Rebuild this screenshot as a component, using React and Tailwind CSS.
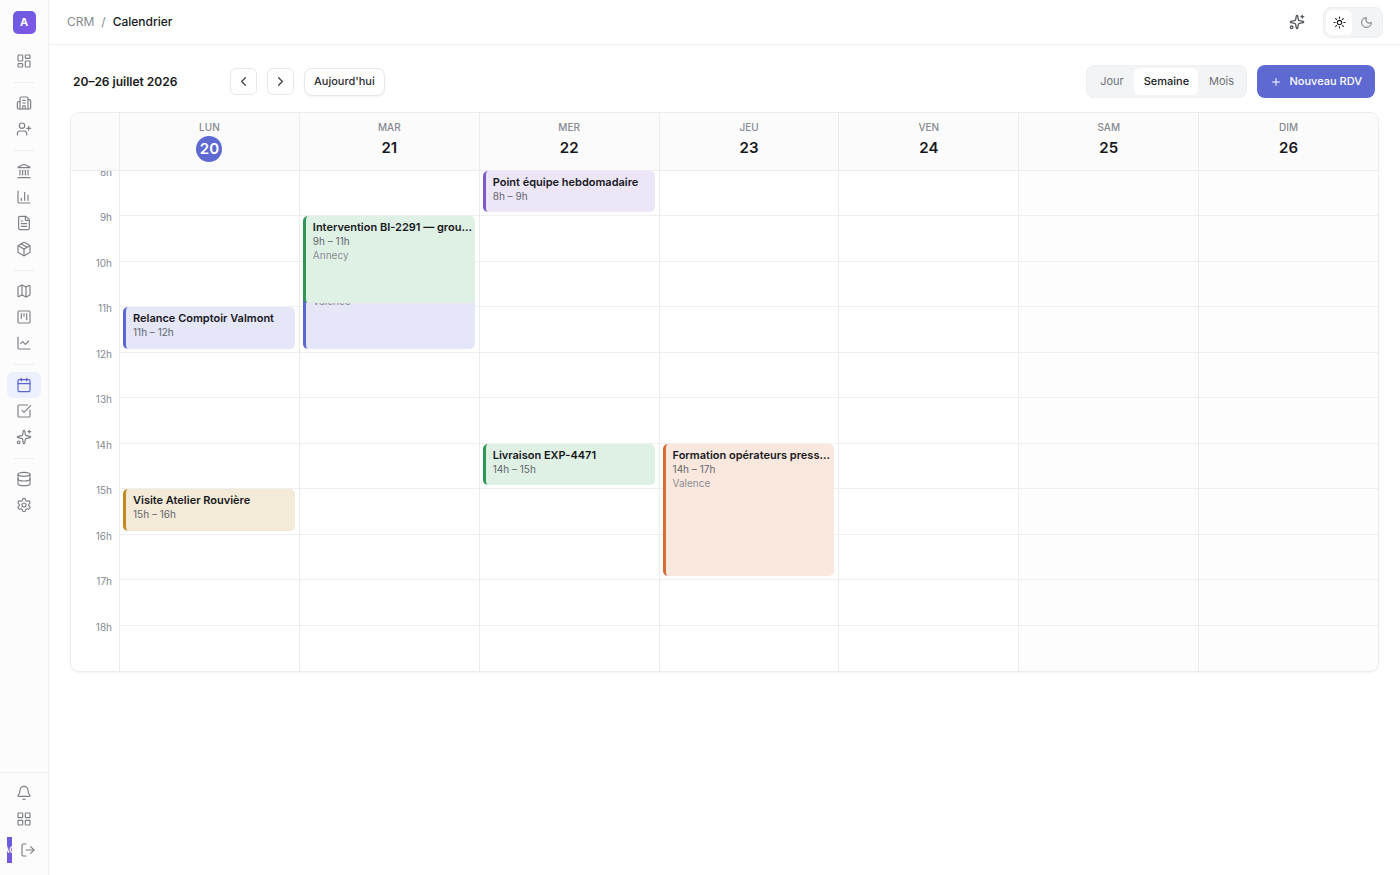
import React from "react";
import {
  LayoutDashboard, Building2, UserPlus, Landmark, ChartColumn, FileText, Package, Map as MapIcon,
  SquareKanban, ChartLine, Calendar, SquareCheckBig, Sparkles, Database, Settings, Bell,
  LayoutGrid, LogOut, ChevronLeft, ChevronRight, Plus, Sun, Moon,
} from "lucide-react";

const navGroups = [
  [["Tableau de bord", LayoutDashboard]],
  [["Entreprises", Building2], ["Contacts", UserPlus]],
  [["Finances", Landmark], ["Statistiques", ChartColumn], ["Documents", FileText], ["Produits", Package]],
  [["Carte", MapIcon], ["Pipeline", SquareKanban], ["Prévisions", ChartLine]],
  [["Calendrier", Calendar], ["Tâches", SquareCheckBig], ["Assistant", Sparkles]],
  [["Données", Database], ["Paramètres", Settings]],
];

const days = [
  ["LUN", 20], ["MAR", 21], ["MER", 22], ["JEU", 23], ["VEN", 24], ["SAM", 25], ["DIM", 26],
];

const hours = [8, 9, 10, 11, 12, 13, 14, 15, 16, 17, 18];

const tones = {
  indigo: "bg-[#e5e6f8] border-[#5b67d3]",
  violet: "bg-[#ece6f8] border-[#7e5bc2]",
  green: "bg-[#dff0e5] border-[#2f9653]",
  amber: "bg-[#f3ebd8] border-[#c08a1c]",
  orange: "bg-[#fae8df] border-[#d96c36]",
};

const rowStart = {
  8: "row-start-1", 9: "row-start-2", 10: "row-start-3", 11: "row-start-4", 14: "row-start-7", 15: "row-start-8",
};
const rowSpan = { 1: "row-span-1", 2: "row-span-2", 3: "row-span-3" };

const events = [
  { day: 20, from: 11, to: 12, title: "Relance Comptoir Valmont", tone: "indigo" },
  { day: 20, from: 15, to: 16, title: "Visite Atelier Rouvière", tone: "amber" },
  { day: 21, from: 10, to: 12, title: "Rendez-vous client", place: "Valence", tone: "indigo" },
  { day: 21, from: 9, to: 11, title: "Intervention BI-2291 — groupe froid", place: "Annecy", tone: "green" },
  { day: 22, from: 8, to: 9, title: "Point équipe hebdomadaire", tone: "violet" },
  { day: 22, from: 14, to: 15, title: "Livraison EXP-4471", tone: "green" },
  { day: 23, from: 14, to: 17, title: "Formation opérateurs presse plieuse", place: "Valence", tone: "orange" },
];

function IconButton({ label, icon: Icon, active }) {
  return (
    <button
      type="button"
      aria-label={label}
      className={`flex h-[26px] w-[34px] items-center justify-center rounded-md ${
        active ? "bg-[#eceffc] text-[#5b63d3]" : "text-[#7c7f85]"
      }`}
    >
      <Icon size={16} strokeWidth={1.75} />
    </button>
  );
}

function Sidebar() {
  return (
    <aside className="flex w-[49px] shrink-0 flex-col border-r border-[#efeff1] bg-[#fcfcfd]">
      <div className="flex h-[45px] items-center justify-center">
        <a
          href="#accueil"
          className="flex h-[23px] w-[23px] items-center justify-center rounded-[5px] bg-linear-to-br from-[#6a5be0] to-[#8058e6] text-[11px] font-bold text-white"
        >
          A
        </a>
      </div>
      <nav className="flex flex-1 flex-col items-center pt-[3px]">
        {navGroups.map((group, i) => (
          <React.Fragment key={i}>
            {i > 0 && <hr className="mt-2 mb-[7px] w-5 border-[#ededef]" />}
            {group.map(([label, icon]) => (
              <IconButton key={label} label={label} icon={icon} active={label === "Calendrier"} />
            ))}
          </React.Fragment>
        ))}
      </nav>
      <div className="flex flex-col items-center border-t border-[#ececee] pt-[7px] pb-3">
        <IconButton label="Notifications" icon={Bell} />
        <IconButton label="Applications" icon={LayoutGrid} />
        <div className="mt-[5px] flex w-full items-center gap-2 pl-[7px]">
          <span className="flex h-[26px] w-[5px] items-center justify-center overflow-hidden bg-linear-to-b from-[#6a5bdd] to-[#7458df] text-[9px] font-semibold text-white">
            <span className="shrink-0">AC</span>
          </span>
          <button type="button" aria-label="Déconnexion" className="flex h-[26px] w-4 items-center justify-center text-[#7c7f85]">
            <LogOut size={16} strokeWidth={1.75} className="shrink-0" />
          </button>
        </div>
      </div>
    </aside>
  );
}

function TopBar() {
  return (
    <header className="flex h-[45px] items-center justify-between border-b border-[#efeff1] pr-[17px] pl-[18px]">
      <nav className="flex items-center gap-[7px] text-[12px] leading-5 font-medium">
        <a href="#crm" className="font-normal text-[#86898f]">CRM</a>
        <span className="font-normal text-[#86898f]">/</span>
        <span className="text-[#17181b]">Calendrier</span>
      </nav>
      <div className="flex items-center gap-[11px]">
        <button type="button" aria-label="Assistant" className="flex h-[30px] w-[30px] items-center justify-center text-[#55585e]">
          <Sparkles size={16} />
        </button>
        <div className="flex rounded-lg border border-[#eeeff1] bg-[#f3f4f5] p-[2px]">
          <button type="button" aria-label="Thème clair" className="flex h-[25px] w-[26px] items-center justify-center rounded-md bg-white text-[#17181b]">
            <Sun size={13} />
          </button>
          <button type="button" aria-label="Thème sombre" className="flex h-[25px] w-7 items-center justify-center text-[#86898f]">
            <Moon size={13} />
          </button>
        </div>
      </div>
    </header>
  );
}

function Toolbar() {
  const square = "flex h-[27px] w-[27px] items-center justify-center rounded-md border border-[#e6e7e9] bg-white text-[#3f4248]";
  return (
    <div className="flex items-center justify-between pr-1 pl-[3px]">
      <div className="flex items-center gap-[10px]">
        <h1 className="w-[147px] text-[12px] font-semibold text-[#17181b]">20–26 juillet 2026</h1>
        <button type="button" aria-label="Semaine précédente" className={square}>
          <ChevronLeft size={15} />
        </button>
        <button type="button" aria-label="Semaine suivante" className={square}>
          <ChevronRight size={15} />
        </button>
        <button type="button" className="h-7 rounded-lg border border-[#e6e7e9] bg-white px-[9px] text-[11px] font-medium text-[#2b2d31] shadow-xs">
          Aujourd'hui
        </button>
      </div>
      <div className="flex items-center gap-[10px]">
        <div className="flex rounded-lg border border-[#eeeff1] bg-[#f3f4f5] p-[2px] text-[11px] text-[#6f7278]">
          <button type="button" className="h-[27px] w-[45px]">Jour</button>
          <button type="button" className="h-[27px] w-[64px] rounded-md bg-white font-medium text-[#17181b]">Semaine</button>
          <button type="button" className="h-[27px] w-[46px]">Mois</button>
        </div>
        <button type="button" className="flex h-[33px] items-center gap-[7px] rounded-lg bg-[#5e69d1] px-[13px] text-[11px] font-medium text-white">
          <Plus size={12} />
          Nouveau RDV
        </button>
      </div>
    </div>
  );
}

function EventCard({ event }) {
  return (
    <article
      className={`col-start-1 mr-1 mb-1 ml-[3px] min-h-0 min-w-0 overflow-hidden rounded-[5px] border-l-3 pt-1 pr-[2px] pl-[7px] text-[10px] ${tones[event.tone]} ${rowStart[event.from]} ${rowSpan[event.to - event.from]}`}
    >
      <h2 className="truncate text-[11px] leading-[14px] font-semibold text-[#17181b]">{event.title}</h2>
      <p className="leading-[14px] text-[#63666d]">{event.from}h – {event.to}h</p>
      {event.place && <p className="leading-[14px] text-[#8a8d92]">{event.place}</p>}
    </article>
  );
}

function WeekGrid() {
  const columns = "grid grid-cols-[48px_repeat(7,minmax(0,1fr))]";
  return (
    <section className="overflow-hidden rounded-[9px] border border-[#ececee] shadow-xs">
      <div className={`${columns} h-[58px] border-b border-[#ececee] bg-[#fbfbfc]`}>
        <div />
        {days.map(([name, number]) => (
          <div key={number} className="flex flex-col items-center border-l border-[#ececee] pt-[7px]">
            <span className="text-[10px] leading-[14px] font-medium text-[#86898f]">{name}</span>
            {number === 20 ? (
              <span className="mt-[2px] flex h-[26px] w-[26px] items-center justify-center rounded-full bg-[#5e69d1] text-[15px] font-semibold text-white">
                {number}
              </span>
            ) : (
              <span className="mt-[2px] text-[15px] leading-6 font-semibold text-[#17181b]">{number}</span>
            )}
          </div>
        ))}
      </div>
      <div className={`${columns} h-[500px]`}>
        <div className="grid grid-rows-11 overflow-hidden">
          {hours.map((hour) => (
            <span key={hour} className="-mt-[6px] pr-[7px] text-right text-[10px] leading-[14px] text-[#86898f]">
              {hour}h
            </span>
          ))}
        </div>
        {days.map(([name, number]) => (
          <div
            key={number}
            className={`grid grid-cols-1 grid-rows-11 border-l border-[#ececee] ${number >= 25 ? "bg-[#fdfdfd]" : "bg-white"}`}
          >
            <div className="col-start-1 row-span-11 row-start-1 grid grid-rows-11 divide-y divide-[#efeff1]">
              {hours.map((hour) => <div key={hour} />)}
            </div>
            {events.filter((event) => event.day === number).map((event) => (
              <EventCard key={event.title} event={event} />
            ))}
          </div>
        ))}
      </div>
    </section>
  );
}

export default function App() {
  return (
    <div className="flex min-h-screen bg-white font-['Inter',sans-serif]">
      <Sidebar />
      <div className="min-w-0 flex-1">
        <TopBar />
        <main className="flex flex-col gap-[14px] px-[21px] pt-5">
          <Toolbar />
          <WeekGrid />
        </main>
      </div>
    </div>
  );
}
